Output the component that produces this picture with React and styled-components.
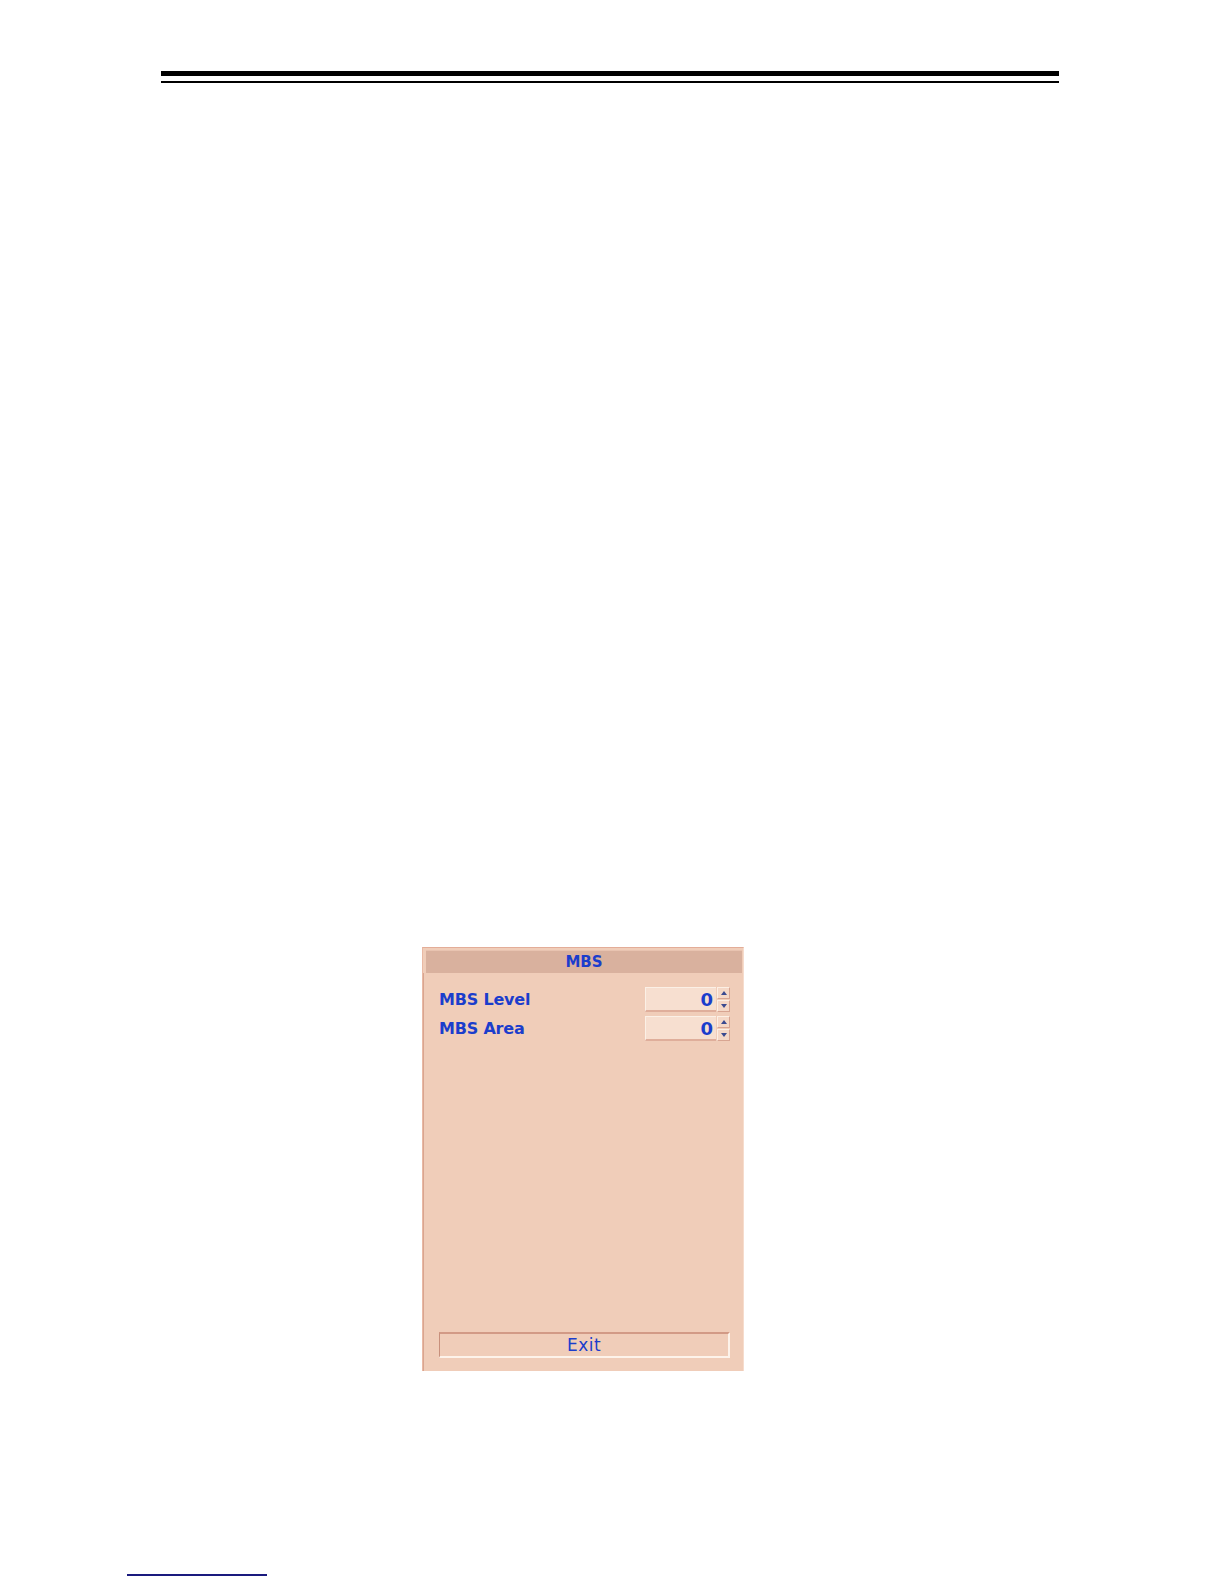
import React from 'react';
import styled, { createGlobalStyle } from 'styled-components';

const GlobalStyle = createGlobalStyle`
  html, body {
    margin: 0;
    padding: 0;
    background: #fff;
  }
`;

const Page = styled.div`
  position: relative;
  width: 1224px;
  height: 1584px;
  display: flex;
  flex-direction: column;
  font-family: "DejaVu Sans", Verdana, sans-serif;
`;

const Header = styled.div`
  display: flex;
  flex-direction: column;
  gap: 5px;
  margin: 71px 165px 0 161px;
`;

const Rule = styled.div`
  height: ${(props) => props.thickness}px;
  background: #000;
`;

const Panel = styled.div`
  display: flex;
  flex-direction: column;
  box-sizing: border-box;
  width: 322px;
  height: 424px;
  margin: 864px 0 0 422px;
  padding: 2px 1px 0 3px;
  background: #f0cdb9;
  border-left: 1px solid #e9b9a4;
  border-top: 1px solid #e3ad98;
  border-right: 1px solid #f6dccd;
`;

const TitleBar = styled.div`
  height: 22px;
  display: flex;
  align-items: center;
  justify-content: center;
  background: #d9b19e;
  border-top: 1px solid #e8c3b0;
  color: #1b3dcc;
  font-weight: bold;
  font-size: 15px;
`;

const Body = styled.div`
  flex: 1;
  display: flex;
  flex-direction: column;
  padding: 14px 12px 13px 15px;
  margin-left: -3px;
  border-left: 1px solid #d9a590;
`;

const Row = styled.div`
  display: flex;
  align-items: center;
  justify-content: space-between;
  height: 25px;
  margin-bottom: 4px;
`;

const Label = styled.span`
  color: #1b3dcc;
  font-weight: bold;
  font-size: 16px;
  letter-spacing: -0.2px;
`;

const Spin = styled.div`
  display: flex;
  height: 25px;
`;

const Field = styled.div`
  width: 71px;
  box-sizing: border-box;
  display: flex;
  align-items: center;
  justify-content: flex-end;
  padding-right: 3px;
  background: #f7dfd0;
  border-top: 1px solid #fbf0e6;
  border-left: 1px solid #fbf0e6;
  border-bottom: 2px solid #dfae9b;
  color: #1b3dcc;
  font-weight: bold;
  font-size: 18px;
`;

const Arrows = styled.div`
  display: flex;
  flex-direction: column;
  justify-content: center;
  gap: 1px;
  padding-left: 1px;
`;

const ArrowButton = styled.div`
  width: 13px;
  height: 12px;
  box-sizing: border-box;
  display: flex;
  align-items: center;
  justify-content: center;
  background: #f5d8c7;
  border: 1px solid #d8a592;
  border-top-color: #fcefe4;
  border-left-color: #fcefe4;
`;

const Spacer = styled.div`
  flex: 1;
`;

const ExitButton = styled.div`
  height: 26px;
  box-sizing: border-box;
  display: flex;
  align-items: center;
  justify-content: center;
  background: #f0cdb9;
  border-top: 2px solid #d29a86;
  border-left: 1px solid #c8907c;
  border-right: 2px solid #fdf3ea;
  border-bottom: 2px solid #fdf3ea;
  color: #1b3dcc;
  font-size: 17px;
  letter-spacing: 0.5px;
`;

const FooterLink = styled.div`
  position: absolute;
  left: 127px;
  top: 1574px;
  width: 140px;
  height: 2px;
  background: #1a1a7e;
`;

const Triangle = ({ down }) => (
  <svg width="6" height="4" viewBox="0 0 6 4">
    <path d={down ? 'M0 0 L6 0 L3 4 Z' : 'M0 4 L6 4 L3 0 Z'} fill="#3a4a90" />
  </svg>
);

const SpinBox = ({ value }) => (
  <Spin>
    <Field>{value}</Field>
    <Arrows>
      <ArrowButton>
        <Triangle />
      </ArrowButton>
      <ArrowButton>
        <Triangle down />
      </ArrowButton>
    </Arrows>
  </Spin>
);

const settings = [
  { label: 'MBS Level', value: 0 },
  { label: 'MBS Area', value: 0 },
];

export default function App() {
  return (
    <Page>
      <GlobalStyle />
      <Header>
        <Rule thickness={5} />
        <Rule thickness={2} />
      </Header>
      <Panel>
        <TitleBar>MBS</TitleBar>
        <Body>
          {settings.map((s) => (
            <Row key={s.label}>
              <Label>{s.label}</Label>
              <SpinBox value={s.value} />
            </Row>
          ))}
          <Spacer />
          <ExitButton>Exit</ExitButton>
        </Body>
      </Panel>
      <FooterLink />
    </Page>
  );
}
